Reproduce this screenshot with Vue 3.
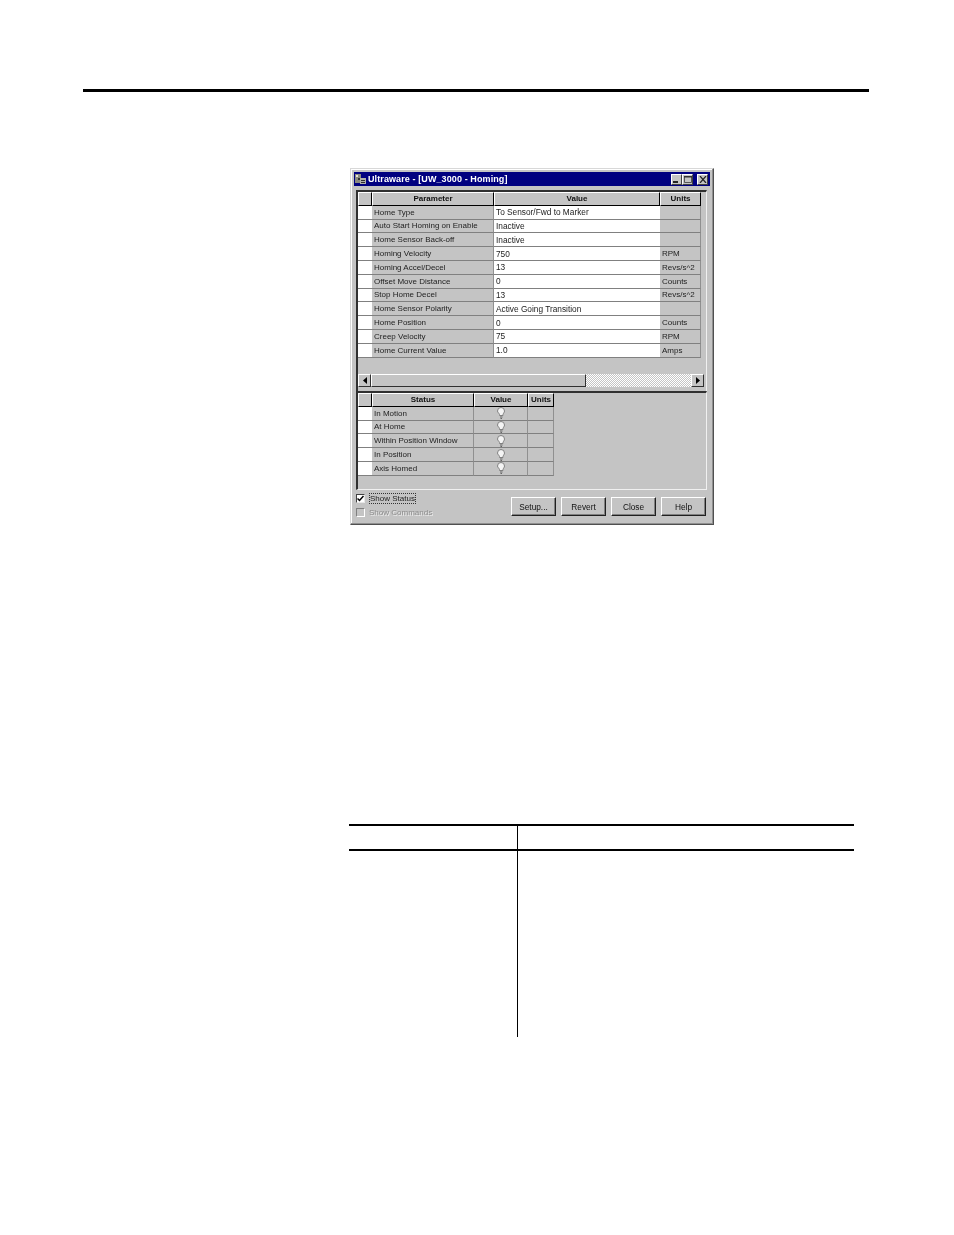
<script setup>
const params = [
  { name: 'Home Type', value: 'To Sensor/Fwd to Marker', units: '' },
  { name: 'Auto Start Homing on Enable', value: 'Inactive', units: '' },
  { name: 'Home Sensor Back-off', value: 'Inactive', units: '' },
  { name: 'Homing Velocity', value: '750', units: 'RPM' },
  { name: 'Homing Accel/Decel', value: '13', units: 'Revs/s^2' },
  { name: 'Offset Move Distance', value: '0', units: 'Counts' },
  { name: 'Stop Home Decel', value: '13', units: 'Revs/s^2' },
  { name: 'Home Sensor Polarity', value: 'Active Going Transition', units: '' },
  { name: 'Home Position', value: '0', units: 'Counts' },
  { name: 'Creep Velocity', value: '75', units: 'RPM' },
  { name: 'Home Current Value', value: '1.0', units: 'Amps' }
]

const statuses = ['In Motion', 'At Home', 'Within Position Window', 'In Position', 'Axis Homed']
const buttons = ['Setup...', 'Revert', 'Close', 'Help']
</script>

<template>
  <div class="page">
    <div class="top-rule"></div>

    <div class="window">
      <div class="titlebar">
        <svg class="app-icon" width="12" height="12" viewBox="0 0 12 12">
          <rect x="0" y="1" width="6" height="9" fill="#8a8a80" />
          <rect x="1" y="2" width="2" height="2" fill="#e8e8d8" />
          <rect x="3" y="5" width="2" height="2" fill="#303030" />
          <rect x="5" y="5" width="6" height="6" fill="#b0b0a8" />
          <rect x="6" y="7" width="4" height="1" fill="#303030" />
          <rect x="6" y="9" width="4" height="1" fill="#303030" />
        </svg>
        <span class="title">Ultraware - [UW_3000 - Homing]</span>
        <div class="caption-btns">
          <span class="cap-btn">
            <svg width="8" height="7" viewBox="0 0 8 7"><rect x="0" y="5" width="5" height="2" fill="#222" /></svg>
          </span>
          <span class="cap-btn">
            <svg width="8" height="7" viewBox="0 0 8 7"><path d="M.5 .5h7v6h-7z" fill="none" stroke="#555" /><rect x="0" y="0" width="8" height="1.500" fill="#333" /></svg>
          </span>
          <span class="cap-btn close">
            <svg width="8" height="7" viewBox="0 0 8 7"><path d="M1 0l6 7M7 0l-6 7" stroke="#222" stroke-width="1.200" fill="none" /></svg>
          </span>
        </div>
      </div>

      <div class="client">
        <div class="pane param-pane">
          <div class="grid param-grid">
            <div class="head"></div>
            <div class="head">Parameter</div>
            <div class="head">Value</div>
            <div class="head">Units</div>
            <template v-for="row in params" :key="row.name">
              <div class="cell white"></div>
              <div class="cell name">{{ row.name }}</div>
              <div class="cell white value">{{ row.value }}</div>
              <div class="cell">{{ row.units }}</div>
            </template>
          </div>

          <div class="scrollbar">
            <span class="arrow">
              <svg width="4" height="7" viewBox="0 0 4 7"><path d="M4 0v7L0 3.500z" fill="#000" /></svg>
            </span>
            <span class="thumb"></span>
            <span class="track"></span>
            <span class="arrow">
              <svg width="4" height="7" viewBox="0 0 4 7"><path d="M0 0v7l4-3.500z" fill="#000" /></svg>
            </span>
          </div>
        </div>

        <div class="pane status-pane">
          <div class="grid status-grid">
            <div class="head"></div>
            <div class="head">Status</div>
            <div class="head">Value</div>
            <div class="head">Units</div>
            <template v-for="s in statuses" :key="s">
              <div class="cell white"></div>
              <div class="cell name">{{ s }}</div>
              <div class="cell bulb">
                <svg width="8" height="12" viewBox="0 0 8 12">
                  <path d="M4 .5a3.500 3.500 0 0 1 3.500 3.500c0 1.500-1.200 2.200-1.500 3.500v1H2.500v-1C2.200 6.200.5 5.500.5 4A3.500 3.500 0 0 1 4 .5z" fill="#f4f4f4" stroke="#808080" />
                  <path d="M3 10h2.500M3.500 11.500h1.500" stroke="#666" fill="none" />
                </svg>
              </div>
              <div class="cell"></div>
            </template>
          </div>
        </div>

        <div class="footer">
          <div class="checks">
            <label class="check-row">
              <span class="checkbox">
                <svg width="7" height="7" viewBox="0 0 7 7"><path d="M.5 3.500l2 2 4-4.500" fill="none" stroke="#000" stroke-width="1.500" /></svg>
              </span>
              <span class="focus-label">Show Status</span>
            </label>
            <label class="check-row disabled">
              <span class="checkbox"></span>
              <span class="disabled-label">Show Commands</span>
            </label>
          </div>
          <div class="buttons">
            <button v-for="b in buttons" :key="b" class="btn" type="button">{{ b }}</button>
          </div>
        </div>
      </div>
    </div>

    <div class="doc-table">
      <div class="doc-head">
        <div class="doc-col-a"></div>
        <div class="doc-col-b"></div>
      </div>
      <div class="doc-body">
        <div class="doc-col-a"></div>
        <div class="doc-col-b"></div>
      </div>
    </div>
  </div>
</template>

<style>
html, body {
  background: #fff;
}
</style>

<style scoped>
.page {
  width: 954px;
  height: 1235px;
  overflow: hidden;
  background: #fff;
  font-family: "Liberation Sans", Arial, sans-serif;
  display: flow-root;
}

.top-rule {
  height: 3px;
  background: #000;
  margin: 89px 85px 0 83px;
}

.window {
  box-sizing: border-box;
  width: 364px;
  height: 357px;
  margin: 76px 0 0 350px;
  padding: 3px;
  background: #c4c4c4;
  border: 1px solid;
  border-color: #d8d8d8 #505050 #505050 #d8d8d8;
  box-shadow: inset -1px -1px 0 #909090, inset 1px 1px 0 #fff;
  display: flex;
  flex-direction: column;
  filter: blur(.3px);
}

.titlebar {
  height: 14px;
  flex-shrink: 0;
  background: #000080;
  color: #fff;
  display: flex;
  align-items: center;
  padding: 0 2px 1px 1px;
  box-sizing: border-box;
}

.app-icon {
  margin-right: 1px;
}

.title {
  font-size: 9px;
  font-weight: bold;
  white-space: nowrap;
  letter-spacing: .1px;
}

.caption-btns {
  margin-left: auto;
  display: flex;
  margin-top: 1px;
}

.cap-btn {
  box-sizing: border-box;
  width: 11px;
  height: 11px;
  background: #c4c4c4;
  border: 1px solid;
  border-color: #fff #404040 #404040 #fff;
  display: flex;
  align-items: center;
  justify-content: center;
}

.cap-btn.close {
  margin-left: 4px;
}

.client {
  flex: 1;
  display: flex;
  flex-direction: column;
  padding: 4px 0 0 2px;
  min-height: 0;
}

.pane {
  box-sizing: border-box;
  border-left: 2px solid #303030;
  border-top: 2px solid #303030;
  border-right: 1px solid #f0f0f0;
  margin-right: 3px;
}

.param-pane {
  height: 201px;
}

.status-pane {
  height: 99px;
  border-bottom: 1px solid #f0f0f0;
}

.grid {
  display: grid;
  grid-auto-rows: 13.8px;
  font-size: 8px;
  color: #222;
}

.param-grid {
  grid-template-columns: 14px 122px 166px 41px;
}

.status-grid {
  grid-template-columns: 14px 102px 54px 26px;
  width: 196px;
}

.head {
  box-sizing: border-box;
  display: flex;
  align-items: center;
  justify-content: center;
  font-weight: bold;
  background: #c4c4c4;
  color: #111;
  border-top: 1px solid #fff;
  border-left: 1px solid #fff;
  border-right: 1px solid #000;
  border-bottom: 1px solid #000;
}

.cell {
  box-sizing: border-box;
  display: flex;
  align-items: center;
  padding-left: 2px;
  background: #c4c4c4;
  border-bottom: 1px solid #808080;
  border-right: 1px solid #909090;
  white-space: nowrap;
  overflow: hidden;
}

.cell.white {
  background: #fff;
  border-right: 0;
}

.value {
  font-size: 8.3px;
}

.bulb {
  justify-content: center;
  padding-left: 1px;
}

.scrollbar {
  display: flex;
  height: 13px;
  margin: 16px 2px 0 0;
}

.arrow {
  box-sizing: border-box;
  width: 13px;
  background: #c4c4c4;
  border: 1px solid;
  border-color: #fff #303030 #303030 #fff;
  display: flex;
  align-items: center;
  justify-content: center;
}

.thumb {
  box-sizing: border-box;
  width: 215px;
  background: #c4c4c4;
  border: 1px solid;
  border-color: #fff #303030 #303030 #fff;
}

.track {
  flex: 1;
  background-color: #fff;
  background-image: repeating-conic-gradient(#c4c4c4 0 25%, #fff 0 50%);
  background-size: 2px 2px;
}

.footer {
  flex: 1;
  display: flex;
  justify-content: space-between;
  padding-right: 4px;
}

.checks {
  display: flex;
  flex-direction: column;
  gap: 2px;
  padding-top: 2px;
}

.check-row {
  display: flex;
  align-items: center;
  gap: 4px;
  font-size: 8px;
  color: #222;
  height: 12px;
}

.checkbox {
  box-sizing: border-box;
  width: 9px;
  height: 9px;
  background: #fff;
  border: 1px solid;
  border-color: #404040 #e8e8e8 #e8e8e8 #404040;
  display: flex;
  align-items: center;
  justify-content: center;
}

.disabled .checkbox {
  background: #c4c4c4;
  border-color: #808080 #fff #fff #808080;
}

.focus-label {
  border: 1px dotted #333;
  line-height: 9px;
}

.disabled-label {
  color: #8c8c8c;
  text-shadow: 1px 1px 0 #eee;
}

.buttons {
  display: flex;
  gap: 5px;
  padding-top: 7px;
}

.btn {
  box-sizing: border-box;
  width: 45px;
  height: 19px;
  padding: 0;
  font: 8.3px "Liberation Sans", Arial, sans-serif;
  color: #111;
  background: #c4c4c4;
  border: 1px solid;
  border-color: #fff #202020 #202020 #fff;
  box-shadow: inset -1px -1px 0 #808080;
}

.doc-table {
  width: 505px;
  margin: 299px 0 0 349px;
}

.doc-head,
.doc-body {
  display: flex;
  border-top: 2px solid #000;
}

.doc-head {
  height: 23px;
}

.doc-body {
  height: 186px;
}

.doc-col-a {
  width: 168px;
  border-right: 1.500px solid #000;
}

.doc-col-b {
  flex: 1;
}
</style>
